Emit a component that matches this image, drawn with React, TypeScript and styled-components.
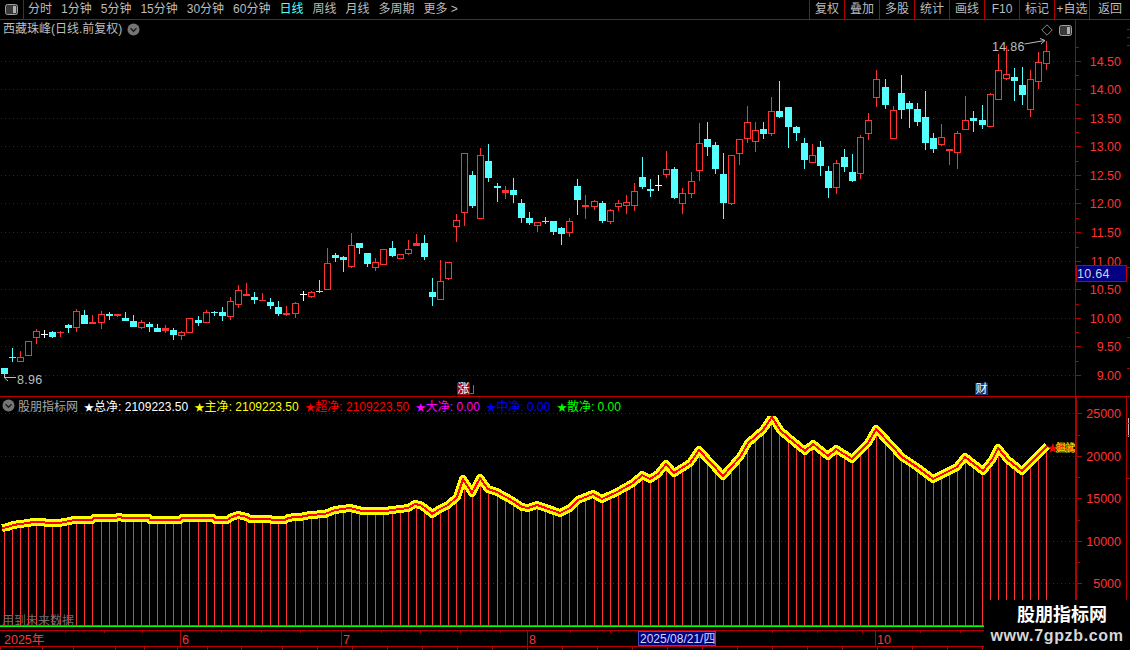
import React from "react";
import styled, { createGlobalStyle } from "styled-components";

const FONT = `"Liberation Sans", "Noto Sans CJK SC", sans-serif`;
const FRAME = "#b00000";
const RED = "#ff3232";
const CYAN = "#54ffff";
const DOT = "#8f0000";

const Global = createGlobalStyle`
  html, body { margin: 0; padding: 0; background: #000; overflow: hidden; }
  body { font-family: ${FONT}; font-size: 12px; color: #c0c0c0; }
`;

type C = [string, number, number, number, number];
const candles: C[] = [
  ["c",368,374,368,374],["c",357,358,348,362],["r",357,362,351,362],["r",341,356,341,356],["r",331,338,329,344],
  ["w",334,334,330,338],["c",332,337,331,338],["r",332,333,331,337],["c",325,328,324,333],["r",311,328,309,332],
  ["c",315,324,310,324],["r",322,324,315,324],["r",314,323,311,329],["c",314,316,312,320],["r",314,316,314,317],
  ["c",318,321,312,321],["c",321,327,315,327],["r",322,328,320,329],["c",324,327,322,332],["c",328,332,324,332],
  ["r",328,331,325,333],["c",330,335,328,340],["r",332,336,331,340],["r",318,333,318,333],["c",320,323,316,326],
  ["r",312,323,310,323],["c",312,313,311,316],["c",312,316,307,321],["r",301,317,297,320],["r",290,305,285,308],
  ["r",294,296,283,296],["c",297,300,292,304],["r",300,301,293,301],["c",302,306,298,309],["c",307,314,301,316],
  ["r",313,315,306,316],["r",303,314,302,318],["w",294,294,291,301],["r",292,297,291,298],["c",291,292,280,293],
  ["r",263,290,248,290],["c",255,258,253,262],["c",257,260,256,272],["r",245,267,233,268],["c",243,248,243,254],
  ["c",253,264,253,267],["r",262,268,258,271],["r",249,265,249,265],["c",248,256,241,257],["r",254,259,254,259],
  ["r",249,254,240,255],["r",243,246,234,246],["c",243,257,235,260],["c",292,297,278,306],["r",281,300,260,300],
  ["r",262,279,262,280],["r",220,227,214,242],["r",153,213,153,226],["c",175,206,171,208],["r",155,219,148,219],
  ["c",161,178,144,182],["c",186,188,183,202],["r",190,193,186,199],["c",190,195,178,203],["c",203,218,199,223],
  ["c",218,223,212,225],["r",222,226,222,232],["c",221,221,217,224],["c",221,232,221,235],["c",228,234,227,245],
  ["r",221,233,218,237],["c",186,200,179,215],["r",205,207,195,219],["r",201,207,200,210],["c",203,221,201,223],
  ["r",210,222,209,224],["r",203,207,200,211],["r",202,206,195,214],["r",191,206,183,211],["c",177,187,157,189],
  ["c",189,191,179,197],["w",185,185,175,191],["r",169,175,151,178],["c",169,198,167,199],["r",193,204,188,214],
  ["r",181,194,172,198],["r",143,171,123,181],["c",139,147,122,156],["c",145,169,142,174],["c",174,203,153,219],
  ["r",155,204,155,205],["r",139,154,139,165],["r",122,139,106,143],["r",130,142,122,152],["c",129,134,122,139],
  ["r",111,134,97,136],["c",111,117,81,118],["c",107,127,107,148],["c",127,133,126,141],["c",143,160,138,169],
  ["r",155,163,144,163],["c",147,166,141,176],["c",171,188,166,198],["r",163,188,160,194],["c",157,167,149,172],
  ["c",172,181,154,182],["r",137,174,135,179],["r",120,134,113,140],["r",79,98,70,107],["c",87,105,79,109],
  ["r",110,139,106,139],["c",93,110,75,119],["c",103,109,101,128],["c",109,122,103,126],["c",117,143,91,150],
  ["c",138,149,133,153],["r",137,145,124,146],["r",149,151,149,165],["r",133,153,131,169],["r",120,130,96,130],
  ["c",118,121,111,132],["c",120,125,105,129],["r",94,127,93,127],["r",70,100,54,100],["r",74,79,46,80],
  ["c",77,81,68,101],["c",85,95,67,105],["r",79,110,70,117],["r",62,82,52,89],["r",51,64,41,70],
];

const STEPS = [12, 24, 36, 48, 61, 73, 85, 97, 109, 121];
const cx = (k: number) => 4 + 8 * k + STEPS.filter((s) => k >= s).length;

const line: [number, number][] = [
  [2,528],[8,527],[13,525],[20,524],[28,523],[33,522],[44,522],[46,523],[60,523],[64,522],[70,521],[74,520],[92,520],[94,518],
  [116,518],[118,517],[125,518],[149,518],[150,520],[180,520],[182,518],[213,518],[215,520],[227,520],[232,517],[238,515],
  [247,517],[250,519],[270,519],[272,520],[285,520],[288,518],[295,517],[300,517],[310,515],[325,514],[335,510],[350,508],
  [362,511],[385,511],[400,509],[408,508],[415,504],[420,505],[425,508],[432,514],[440,509],[448,505],[457,497],[463,479],
  [472,493],[480,478],[488,489],[497,492],[513,501],[522,507],[528,508],[537,505],[543,507],[560,513],[570,508],[578,500],
  [593,494],[602,499],[617,492],[633,483],[642,475],[650,479],[658,474],[666,464],[674,473],[690,463],[699,450],[723,476],
  [740,457],[748,443],[763,430],[772,417],[780,430],[788,437],[805,451],[813,444],[828,456],[836,449],[852,459],[868,443],
  [876,429],[893,447],[902,457],[917,467],[933,479],[957,467],[965,457],[983,471],[992,460],[998,448],[1008,460],[1022,471],[1047,446],
];

const lineY = (x: number) => {
  for (let i = 1; i < line.length; i++) {
    if (x <= line[i][0]) {
      const [x0, y0] = line[i - 1];
      const [x1, y1] = line[i];
      return y0 + ((y1 - y0) * (x - x0)) / (x1 - x0 || 1);
    }
  }
  return line[line.length - 1][1];
};

const Page = styled.div`
  position: relative;
  width: 1130px;
  height: 650px;
  overflow: hidden;
  background: #000;
  display: flex;
  flex-direction: column;
`;

const Toolbar = styled.div`
  height: 20px;
  box-sizing: border-box;
  border-bottom: 1px solid #c00000;
  display: flex;
  align-items: stretch;
  flex: none;
`;
const PanelButton = styled.div`
  width: 24px;
  box-sizing: border-box;
  border-right: 1px solid ${FRAME};
  display: flex;
  align-items: center;
  justify-content: center;
  padding-right: 1px;
`;
const PeriodGroup = styled.div`
  display: flex;
  align-items: center;
  gap: 9px;
  padding-left: 4px;
  flex: 1;
`;
const Period = styled.span<{ $active?: boolean }>`
  color: ${(p) => (p.$active ? "#54ffff" : "#bcbcbc")};
  line-height: 19px;
  white-space: nowrap;
`;
const ActionGroup = styled.div`
  display: flex;
`;
const Action = styled.div<{ $w: number }>`
  width: ${(p) => p.$w}px;
  box-sizing: border-box;
  border-left: 1px solid ${FRAME};
  color: #bcbcbc;
  text-align: center;
  line-height: 19px;
  white-space: nowrap;
`;

const UpperPanel = styled.div`
  position: relative;
  height: 377px;
  box-sizing: border-box;
  border-bottom: 1px solid #c00000;
  display: flex;
  flex: none;
`;
const LowerPanel = styled.div`
  position: relative;
  height: 233px;
  display: flex;
  flex: none;
`;
const Plot = styled.svg`
  display: block;
  flex: none;
`;
const Axis = styled.svg<{ $thick?: boolean }>`
  display: block;
  flex: none;
  box-sizing: content-box;
  border-left: ${(p) => (p.$thick ? 2 : 1)}px solid ${FRAME};
`;
const AxisText = styled.text`
  font-family: ${FONT};
  font-size: 12.5px;
  fill: ${RED};
  text-anchor: end;
`;
const ChartLabel = styled.text`
  font-family: ${FONT};
  font-size: 12.5px;
  letter-spacing: 0.3px;
  fill: #bdbdbd;
`;
const QuoteLabel = styled(ChartLabel)`
  fill: #d0d0e8;
`;
const EndLabel = styled.text`
  font-family: ${FONT};
  font-size: 9.5px;
  fill: #ff0000;
  stroke: #ffff00;
  stroke-width: 1px;
  paint-order: stroke;
`;
const EndStar = styled.text`
  font-family: ${FONT};
  font-size: 11px;
  fill: #ff0000;
`;

const TitleBar = styled.div`
  position: absolute;
  left: 3px;
  top: 1px;
  display: flex;
  align-items: center;
  gap: 5px;
  line-height: 17px;
  color: #bdbdbd;
  white-space: nowrap;
`;
const TopIcons = styled.div`
  position: absolute;
  left: 1041px;
  top: 4px;
  display: flex;
  align-items: center;
  gap: 6px;
`;
const EventTag = styled.div<{ $bg: string; $left: number }>`
  position: absolute;
  left: ${(p) => p.$left}px;
  top: 363px;
  width: 13px;
  height: 12px;
  background: ${(p) => p.$bg};
  color: #fff;
  font-size: 12px;
  line-height: 12px;
  text-align: center;
`;
const TagMark = styled.span`
  position: absolute;
  left: 13px;
  top: 2px;
  width: 3px;
  height: 8px;
  border-right: 1px solid ${RED};
  border-bottom: 1px solid ${RED};
`;

const Legend = styled.div`
  position: absolute;
  left: 2px;
  top: 0;
  height: 17px;
  display: flex;
  align-items: center;
  white-space: nowrap;
`;
const LegendName = styled.span`
  color: #a8a8a8;
  margin: 0 6px 0 3px;
`;
const LegendItem = styled.span<{ $c: string }>`
  color: ${(p) => p.$c};
  margin-right: 6.5px;
`;
const LegendStar = styled.span`
  font-size: 10px;
`;
const DataNote = styled.div`
  position: absolute;
  left: 2px;
  top: 218px;
  color: #6e6e6e;
  font-size: 12px;
  line-height: 13px;
  white-space: nowrap;
`;

const TimeAxis = styled.svg`
  display: block;
  flex: none;
  border-top: 1px solid #c00000;
  border-bottom: 1px solid #c00000;
`;
const TimeText = styled.text`
  font-family: ${FONT};
  font-size: 12.5px;
  fill: ${RED};
`;
const DateText = styled.text`
  font-family: ${FONT};
  font-size: 12px;
  fill: #d6d6ff;
`;

const BottomStrip = styled.div`
  height: 3px;
  display: flex;
  flex: none;
`;
const BottomCell = styled.div<{ $w: number }>`
  width: ${(p) => p.$w}px;
  flex: none;
  box-sizing: border-box;
  border-left: 1px solid ${FRAME};
`;

const Brand = styled.div`
  position: absolute;
  right: 0;
  bottom: 0;
  width: 146px;
  height: 50px;
  background: #000;
  text-align: center;
  white-space: nowrap;
`;
const BrandName = styled.div`
  color: #fff;
  font-weight: 700;
  font-size: 18px;
  line-height: 24px;
  margin-top: 3px;
  padding-left: 10px;
`;
const BrandUrl = styled.div`
  color: #d6d6d6;
  font-weight: 700;
  font-size: 16px;
  line-height: 18px;
  letter-spacing: 0.65px;
`;

const Chevron = () => (
  <svg width="13" height="13" viewBox="0 0 13 13">
    <circle cx="6.5" cy="6.5" r="6" fill="#757575" />
    <path d="M3.5 5.2 L6.5 8.2 L9.5 5.2" fill="none" stroke="#1c1c1c" strokeWidth="1.4" />
  </svg>
);

const Split = () => (
  <svg width="13" height="11" viewBox="0 0 13 11">
    <rect x="0.5" y="0.5" width="12" height="10" rx="2" fill="#3a3a3a" stroke="#a0a0a0" />
    <rect x="8" y="2" width="3" height="7" fill="#b0b0b0" />
  </svg>
);

const priceGrid: [number, string][] = [
  [61,"14.50"],[89,"14.00"],[118,"13.50"],[146,"13.00"],[175,"12.50"],[203,"12.00"],
  [232,"11.50"],[261,"11.00"],[289,"10.50"],[318,"10.00"],[346,"9.50"],[375,"9.00"],
];
const flowGrid: [number, string][] = [[413,"25000"],[456,"20000"],[498,"15000"],[541,"10000"],[583,"5000"]];

const Dotted = ({ y }: { y: number }) => (
  <line x1="1" x2="1075" y1={y + 0.5} y2={y + 0.5} stroke={DOT} strokeDasharray="1 3" shapeRendering="crispEdges" />
);

const Candle = ({ d, k }: { d: C; k: number }) => {
  const [t, top, bot, hi, lo] = d;
  const x = cx(k);
  const col = t === "r" ? RED : t === "c" ? CYAN : "#ffffff";
  const h = bot - top;
  const hollow = t === "r" && h > 3;
  return (
    <g fill={col} shapeRendering="crispEdges">
      {hi < top && <rect x={x} y={hi} width="1" height={top - hi} />}
      {lo > bot && <rect x={x} y={bot} width="1" height={lo - bot} />}
      {hollow ? (
        <rect x={x - 2.5} y={top + 0.5} width="6" height={h - 1} fill="#000" stroke={col} />
      ) : (
        <rect x={x - 3} y={top} width="7" height={Math.max(h, 1)} />
      )}
    </g>
  );
};

const yTicks = (ys: number[]) => {
  const mids: number[] = [];
  for (let i = 1; i < ys.length; i++) mids.push(Math.round((ys[i - 1] + ys[i]) / 2));
  return mids;
};

const legend: [string, string, string][] = [
  ["#ffffff", "总净", "2109223.50"],
  ["#ffff00", "主净", "2109223.50"],
  ["#ff0000", "超净", "2109223.50"],
  ["#ff00ff", "大净", "0.00"],
  ["#0000ff", "中净", "0.00"],
  ["#00ff00", "散净", "0.00"],
];

const cells = [42, 31, 42, 29, 33, 30, 34, 41, 35, 35, 35, 35, 35, 35, 35, 35, 35, 35, 35, 35, 35, 35, 35, 35, 35, 35, 35, 35, 35, 35, 35, 35];
const linePts = line.map((p) => p.join(",")).join(" ");
const timeTicks = [65, 104, 142, 221, 261, 300, 381, 420, 460, 500, 570, 610, 772, 817, 862, 920, 960];

export default function App() {
  const priceYs = priceGrid.map((g) => g[0]);
  const flowYs = flowGrid.map((g) => g[0]);
  return (
    <Page>
      <Global />
      <Toolbar>
        <PanelButton><Split /></PanelButton>
        <PeriodGroup>
          {["分时", "1分钟", "5分钟", "15分钟", "30分钟", "60分钟"].map((t) => <Period key={t}>{t}</Period>)}
          <Period $active>日线</Period>
          {["周线", "月线", "多周期", "更多 >"].map((t) => <Period key={t}>{t}</Period>)}
        </PeriodGroup>
        <ActionGroup>
          {["复权", "叠加", "多股", "统计", "画线", "F10", "标记", "+自选"].map((t) => <Action key={t} $w={35}>{t}</Action>)}
          <Action $w={41}>返回</Action>
        </ActionGroup>
      </Toolbar>

      <UpperPanel>
        <Plot width="1075" height="376" viewBox="0 20 1075 376">
          {priceGrid.map(([y]) => <Dotted key={y} y={y} />)}
          {candles.map((d, k) => <Candle key={k} d={d} k={k} />)}
          <ChartLabel x="992" y="50.5">14.86</ChartLabel>
          <path d="M1024.5 44 L1045 40.5 M1040 38.5 L1045 40.5 L1041 44" fill="none" stroke="#bdbdbd" />
          <ChartLabel x="17" y="383.5">8.96</ChartLabel>
          <path d="M16 377.5 L5 377.5 M4.5 374 L4.5 378 M4.5 378 L8 381" fill="none" stroke="#bdbdbd" />
        </Plot>
        <Axis width="54" height="376" viewBox="1076 20 54 376">
          {priceGrid.map(([y, t]) => (
            <g key={y}>
              <rect x="1076" y={y} width="5" height="1" fill={FRAME} />
              <AxisText x="1121" y={y + 4.5}>{t}</AxisText>
            </g>
          ))}
          {yTicks(priceYs).map((y) => <rect key={y} x="1076" y={y} width="3" height="1" fill={FRAME} />)}
          <rect x="1076" y="47" width="3" height="1" fill={FRAME} />
          {[29, 37, 45, 267, 337, 368].map((y) => <rect key={y} x="1127" y={y} width="3" height="1" fill={FRAME} />)}
          <rect x="1076" y="265" width="50" height="16" fill="#000080" stroke="#c00000" shapeRendering="crispEdges" />
          <QuoteLabel x="1077" y="277.5">10.64</QuoteLabel>
        </Axis>
        <TitleBar>西藏珠峰(日线.前复权)<Chevron /></TitleBar>
        <TopIcons>
          <svg width="12" height="12" viewBox="0 0 12 12">
            <path d="M6 0.8 L11.2 6 L6 11.2 L0.8 6 Z" fill="none" stroke="#8a8a8a" />
          </svg>
          <Split />
        </TopIcons>
        <EventTag $bg="#8f0b10" $left={457}>涨<TagMark /></EventTag>
        <EventTag $bg="#0c3a70" $left={975}>财</EventTag>
      </UpperPanel>

      <LowerPanel>
        <Plot width="1075" height="233" viewBox="0 397 1075 233">
          <defs>
            <clipPath id="flowClip"><rect x="0" y="416" width="1075" height="214" /></clipPath>
          </defs>
          {flowGrid.map(([y]) => <Dotted key={y} y={y} />)}
          {candles.map((_, k) => {
            const x = cx(k);
            const y = Math.round(lineY(x + 0.5));
            return <rect key={k} x={x} y={y} width="1" height={625 - y} fill={RED} shapeRendering="crispEdges" />;
          })}
          <rect x="0" y="625" width="1075" height="1" fill="#c030c0" shapeRendering="crispEdges" />
          <rect x="0" y="626" width="1075" height="1" fill="#00ff00" shapeRendering="crispEdges" />
          <g clipPath="url(#flowClip)">
            <polyline points={linePts} fill="none" stroke="#ffff00" strokeWidth="8" strokeLinejoin="round" shapeRendering="crispEdges" />
            <polyline points={linePts} fill="none" stroke="#ff0000" strokeWidth="2" strokeLinejoin="round" shapeRendering="crispEdges" />
          </g>
          <EndStar x="1047" y="451.5">★</EndStar>
          <EndLabel x="1056" y="451">担扰</EndLabel>
        </Plot>
        <Axis $thick width="53" height="233" viewBox="1077 397 53 233">
          {flowGrid.map(([y, t]) => (
            <g key={y}>
              <rect x="1077" y={y} width="5" height="1" fill={FRAME} />
              <AxisText x="1121" y={y + 4.5}>{t}</AxisText>
            </g>
          ))}
          {[...yTicks(flowYs), 605].map((y) => <rect key={y} x="1077" y={y} width="3" height="1" fill={FRAME} />)}
          <rect x="1126" y="397" width="1" height="233" fill={FRAME} />
          <rect x="1128" y="418" width="1" height="19" fill="#b8b8b8" />
          {[423, 435, 478].map((y) => <rect key={y} x="1127" y={y} width="3" height="1" fill={FRAME} />)}
        </Axis>
        <Legend>
          <Chevron />
          <LegendName>股朋指标网</LegendName>
          {legend.map(([c, name, val]) => (
            <LegendItem key={name} $c={c}><LegendStar>★</LegendStar>{name}: {val}</LegendItem>
          ))}
        </Legend>
        <DataNote>用到未来数据</DataNote>
      </LowerPanel>

      <TimeAxis width="1130" height="15" viewBox="0 631 1130 15">
        {timeTicks.map((x) => <rect key={x} x={x} y="631" width="1" height="2" fill={FRAME} />)}
        <TimeText x="4" y="643.5">2025年</TimeText>
        {[[180, "6"], [341, "7"], [527, "8"], [875, "10"]].map(([x, t]) => (
          <g key={t as string}>
            <rect x={x as number} y="631" width="1" height="15" fill={FRAME} />
            <TimeText x={(x as number) + 2} y="643.5">{t}</TimeText>
          </g>
        ))}
        <rect x="638.5" y="631.5" width="77" height="14" fill="#000080" stroke="#4848c8" shapeRendering="crispEdges" />
        <DateText x="640" y="643">2025/08/21/四</DateText>
      </TimeAxis>

      <BottomStrip>
        {cells.map((w, i) => <BottomCell key={i} $w={w} />)}
      </BottomStrip>

      <Brand>
        <BrandName>股朋指标网</BrandName>
        <BrandUrl>www.7gpzb.com</BrandUrl>
      </Brand>
    </Page>
  );
}
